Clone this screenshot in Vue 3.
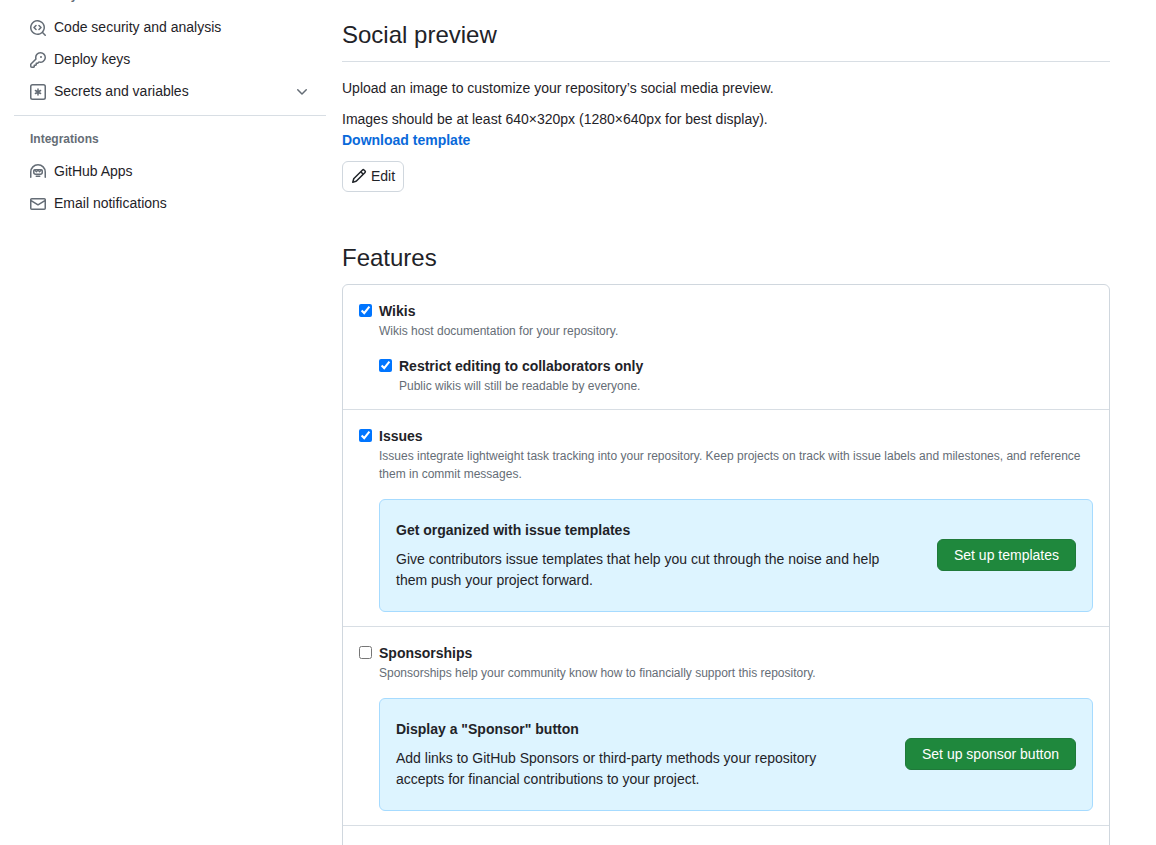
<script setup>
import { reactive } from 'vue'

const enabled = reactive({
  wikis: true,
  restrict: true,
  issues: true,
  sponsorships: false,
})

const icons = {
  codescan:
    'M8.47 4.97a.75.75 0 0 0 0 1.06L9.94 7.5 8.47 8.97a.75.75 0 1 0 1.06 1.06l2-2a.75.75 0 0 0 0-1.06l-2-2a.75.75 0 0 0-1.06 0ZM6.53 6.03a.75.75 0 0 0-1.06-1.06l-2 2a.75.75 0 0 0 0 1.06l2 2a.75.75 0 1 0 1.06-1.06L5.06 7.5l1.47-1.47ZM12.246 13.307a7.501 7.501 0 1 1 1.06-1.06l2.474 2.473a.749.749 0 0 1-.326 1.275.749.749 0 0 1-.734-.215ZM1.5 7.5a6.002 6.002 0 0 0 3.608 5.504 6.002 6.002 0 0 0 6.486-1.117.748.748 0 0 1 .292-.293A6 6 0 1 0 1.5 7.5Z',
  key: 'M10.5 0a5.499 5.499 0 1 1-1.288 10.848l-.932.932a.749.749 0 0 1-.53.22H7v.75a.749.749 0 0 1-.22.53l-.5.5a.749.749 0 0 1-.53.22H5v.75a.749.749 0 0 1-.22.53l-.5.5a.749.749 0 0 1-.53.22h-2A1.75 1.75 0 0 1 0 14.25v-2c0-.199.079-.389.22-.53l4.932-4.932A5.5 5.5 0 0 1 10.5 0Zm-4 5.5c-.001.431.069.86.205 1.269a.75.75 0 0 1-.181.768L1.5 12.56v1.69c0 .138.112.25.25.25h1.69l.06-.06v-1.19a.75.75 0 0 1 .75-.75h1.19l.06-.06v-1.19a.75.75 0 0 1 .75-.75h1.19l1.023-1.025a.75.75 0 0 1 .768-.18A4 4 0 1 0 6.5 5.5ZM11 6a1 1 0 1 1 0-2 1 1 0 0 1 0 2Z',
  mail: 'M1.75 2h12.5c.966 0 1.75.784 1.75 1.75v8.5A1.75 1.75 0 0 1 14.25 14H1.75A1.75 1.75 0 0 1 0 12.25v-8.5C0 2.784.784 2 1.75 2ZM1.5 12.251c0 .138.112.25.25.25h12.5a.25.25 0 0 0 .25-.25V5.809L8.38 9.397a.75.75 0 0 1-.76 0L1.5 5.809v6.442Zm13-8.181v-.32a.25.25 0 0 0-.25-.25H1.75a.25.25 0 0 0-.25.25v.32L8 7.88Z',
  chevron:
    'M12.78 5.22a.749.749 0 0 1 0 1.06l-4.25 4.25a.749.749 0 0 1-1.06 0L3.22 6.28a.749.749 0 1 1 1.06-1.06L8 8.939l3.72-3.719a.749.749 0 0 1 1.06 0Z',
  pencil:
    'M11.013 1.427a1.75 1.75 0 0 1 2.474 0l1.086 1.086a1.75 1.75 0 0 1 0 2.474l-8.61 8.61c-.21.21-.47.364-.756.445l-3.251.93a.75.75 0 0 1-.927-.928l.929-3.25c.081-.286.235-.547.445-.758l8.61-8.61Zm.176 4.823L9.75 4.81l-6.286 6.287a.253.253 0 0 0-.064.108l-.558 1.953 1.953-.558a.253.253 0 0 0 .108-.064Zm1.238-3.763a.25.25 0 0 0-.354 0L10.811 3.75l1.439 1.44 1.263-1.263a.25.25 0 0 0 0-.354Z',
}
</script>

<template>
  <div class="page">
    <nav class="sidebar" aria-label="Repository settings">
      <h3 class="group">Security</h3>
      <a class="item" href="#security">
        <svg class="icon" viewBox="0 0 16 16" aria-hidden="true"><path :d="icons.codescan" /></svg>
        <span>Code security and analysis</span>
      </a>
      <a class="item" href="#keys">
        <svg class="icon" viewBox="0 0 16 16" aria-hidden="true"><path :d="icons.key" /></svg>
        <span>Deploy keys</span>
      </a>
      <button class="item" type="button" aria-expanded="false">
        <svg class="icon line" viewBox="0 0 16 16" aria-hidden="true">
          <rect x="0.75" y="0.75" width="14.5" height="14.5" rx="1.75" />
          <path d="M8 5v6M5.4 6.5l5.2 3M10.6 6.5l-5.2 3" />
        </svg>
        <span>Secrets and variables</span>
        <svg class="icon trailing" viewBox="0 0 16 16" aria-hidden="true"><path :d="icons.chevron" /></svg>
      </button>
      <hr class="divider" />
      <h3 class="group">Integrations</h3>
      <a class="item" href="#apps">
        <svg class="icon line" viewBox="0 0 16 16" aria-hidden="true">
          <path d="M.75 13.25V8a7.25 7.25 0 0 1 14.5 0v5.25M6.25 12.25h3.5" />
          <path d="M4.75 5.75h6.5a1 1 0 0 1 1 1v1.5a2 2 0 0 1-2 2h-4.5a2 2 0 0 1-2-2v-1.5a1 1 0 0 1 1-1Z" />
          <path stroke-width="1.2" stroke-linejoin="round" d="M4.8 6.3l1.6 1.5L8 6.3l1.6 1.5 1.6-1.5" />
        </svg>
        <span>GitHub Apps</span>
      </a>
      <a class="item" href="#email">
        <svg class="icon" viewBox="0 0 16 16" aria-hidden="true"><path :d="icons.mail" /></svg>
        <span>Email notifications</span>
      </a>
    </nav>

    <main class="content">
      <section class="social">
        <h2 class="title ruled">Social preview</h2>
        <p>Upload an image to customize your repository’s social media preview.</p>
        <p>
          Images should be at least 640×320px (1280×640px for best display).<br />
          <a class="download" href="#template">Download template</a>
        </p>
        <button class="edit" type="button">
          <svg viewBox="0 0 16 16" aria-hidden="true"><path :d="icons.pencil" /></svg>
          Edit
        </button>
      </section>

      <section>
        <h2 class="title">Features</h2>
        <div class="box">
          <div class="row">
            <div class="option">
              <input id="wikis" v-model="enabled.wikis" type="checkbox" />
              <label for="wikis">Wikis</label>
              <p class="note">Wikis host documentation for your repository.</p>
              <div class="option nested">
                <input id="restrict" v-model="enabled.restrict" type="checkbox" />
                <label for="restrict">Restrict editing to collaborators only</label>
                <p class="note">Public wikis will still be readable by everyone.</p>
              </div>
            </div>
          </div>

          <div class="row">
            <div class="option">
              <input id="issues" v-model="enabled.issues" type="checkbox" />
              <label for="issues">Issues</label>
              <p class="note">
                Issues integrate lightweight task tracking into your repository. Keep projects on track with issue labels
                and milestones, and reference them in commit messages.
              </p>
              <div class="notice nested">
                <div class="notice-text">
                  <h4>Get organized with issue templates</h4>
                  <p>
                    Give contributors issue templates that help you cut through the noise and help them push your project
                    forward.
                  </p>
                </div>
                <button class="primary" type="button">Set up templates</button>
              </div>
            </div>
          </div>

          <div class="row">
            <div class="option">
              <input id="sponsorships" v-model="enabled.sponsorships" type="checkbox" />
              <label for="sponsorships">Sponsorships</label>
              <p class="note">Sponsorships help your community know how to financially support this repository.</p>
              <div class="notice nested">
                <div class="notice-text">
                  <h4>Display a "Sponsor" button</h4>
                  <p>
                    Add links to GitHub Sponsors or third-party methods your repository accepts for financial
                    contributions to your project.
                  </p>
                </div>
                <button class="primary" type="button">Set up sponsor button</button>
              </div>
            </div>
          </div>

          <div class="row upcoming"></div>
        </div>
      </section>
    </main>
  </div>
</template>

<style>
body {
  margin: 0;
  background: #ffffff;
}
</style>

<style scoped>
.page {
  display: grid;
  grid-template-columns: 312px minmax(0, 1fr);
  column-gap: 16px;
  align-items: start;
  box-sizing: border-box;
  height: 100vh;
  padding: 0 46px 0 14px;
  overflow: hidden;
  color: #1f2328;
  font-family: 'Liberation Sans', Arial, sans-serif;
  font-size: 14px;
  line-height: 21px;
}

h2,
h3,
h4,
p {
  margin: 0;
}

button {
  font-family: inherit;
  font-size: 14px;
  cursor: pointer;
}

/* The first group heading is scrolled past the top edge. */
.sidebar {
  margin-top: -21px;
}

.group {
  padding: 7px 16px;
  color: #656d76;
  font-size: 12px;
  font-weight: 600;
  line-height: 18px;
}

.item {
  display: flex;
  gap: 8px;
  box-sizing: border-box;
  width: 100%;
  padding: 6px 16px;
  border: 0;
  background: none;
  color: #1f2328;
  line-height: 20px;
  text-align: left;
  text-decoration: none;
}

.icon {
  flex: none;
  width: 16px;
  height: 16px;
  margin-top: 3px;
  fill: #656d76;
}

.icon.line {
  fill: none;
  stroke: #656d76;
  stroke-width: 1.5;
  stroke-linecap: round;
}

.trailing {
  margin-left: auto;
}

.divider {
  height: 1px;
  margin: 8px 0 7px;
  border: 0;
  background: #d8dee4;
}

.content {
  padding-top: 17px;
}

.title {
  padding-bottom: 8px;
  font-size: 24px;
  font-weight: 400;
  line-height: 36px;
}

.ruled {
  margin-bottom: 16px;
  border-bottom: 1px solid #d8dee4;
}

.social {
  margin-bottom: 48px;
}

.social p {
  margin-bottom: 10px;
}

.download {
  color: #0969da;
  font-weight: 600;
  text-decoration: none;
}

.edit {
  display: flex;
  align-items: center;
  gap: 4px;
  padding: 4px 8px;
  border: 1px solid #d0d7de;
  border-radius: 6px;
  background: #ffffff;
  color: #1f2328;
  line-height: 21px;
}

.edit svg {
  width: 16px;
  height: 16px;
  margin-bottom: 1px;
  fill: #1f2328;
}

.box {
  border: 1px solid #d0d7de;
  border-radius: 6px;
}

.row {
  padding: 16px 16px 14px;
}

.row + .row {
  border-top: 1px solid #d8dee4;
}

.upcoming {
  height: 96px;
}

.option {
  display: grid;
  grid-template-columns: 20px minmax(0, 1fr);
}

.option > * {
  grid-column: 2;
}

.option > input {
  grid-column: 1;
  width: 13px;
  height: 13px;
  margin: 3px 0 0;
}

.option > label {
  justify-self: start;
  font-weight: 600;
}

.note {
  color: #656d76;
  font-size: 12px;
  line-height: 18px;
}

.nested {
  margin-top: 16px;
}

.notice {
  display: flex;
  align-items: center;
  justify-content: space-between;
  gap: 48px;
  padding: 20px 16px;
  border: 1px solid #a6dbff;
  border-radius: 6px;
  background: #ddf4ff;
}

.notice h4 {
  margin-bottom: 8px;
  font-size: 14px;
  font-weight: 600;
}

.primary {
  flex: none;
  margin-bottom: 1px;
  padding: 5px 16px;
  border: 1px solid #1f793a;
  border-radius: 6px;
  background: #1f883d;
  color: #ffffff;
  line-height: 20px;
}
</style>
